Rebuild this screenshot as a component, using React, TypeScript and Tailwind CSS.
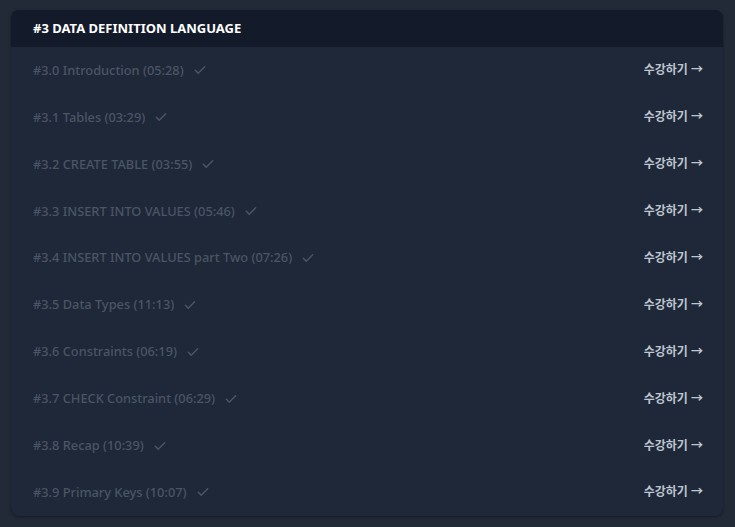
const LESSONS = [
  "#3.0 Introduction (05:28)",
  "#3.1 Tables (03:29)",
  "#3.2 CREATE TABLE (03:55)",
  "#3.3 INSERT INTO VALUES (05:46)",
  "#3.4 INSERT INTO VALUES part Two (07:26)",
  "#3.5 Data Types (11:13)",
  "#3.6 Constraints (06:19)",
  "#3.7 CHECK Constraint (06:29)",
  "#3.8 Recap (10:39)",
  "#3.9 Primary Keys (10:07)",
];

function Check() {
  return (
    <svg width="14" height="14" viewBox="0 0 24 24" fill="none" stroke="currentColor" strokeWidth="2.5" strokeLinecap="round" strokeLinejoin="round">
      <path d="M4 12.5l5 5L20 6.5" />
    </svg>
  );
}

export default function App() {
  return (
    <div
      className="min-h-screen bg-[#232a37] px-[11px] pt-[10px]"
      style={{ fontFamily: '"Noto Sans", "Noto Sans CJK KR", sans-serif' }}
    >
      <div className="w-[712px] rounded-lg overflow-hidden bg-[#1e2839] shadow-[0_1px_3px_rgba(0,0,0,0.4)]">
        {/* Header */}
        <div className="h-[37px] flex items-center px-[22px] bg-[#131a29]">
          <h2 className="text-[13px] font-bold text-white">#3 DATA DEFINITION LANGUAGE</h2>
        </div>

        {/* Lessons */}
        {LESSONS.map((title) => (
          <div key={title} className="h-[46.9px] flex items-center justify-between pl-[22px] pr-[20px]">
            <div className="flex items-center gap-[9px] text-[#4b5565]">
              <span className="text-[12.8px] font-medium">{title}</span>
              <Check />
            </div>
            <span className="text-[12px] font-semibold text-[#bfc6d0]">수강하기 →</span>
          </div>
        ))}
      </div>
    </div>
  );
}
